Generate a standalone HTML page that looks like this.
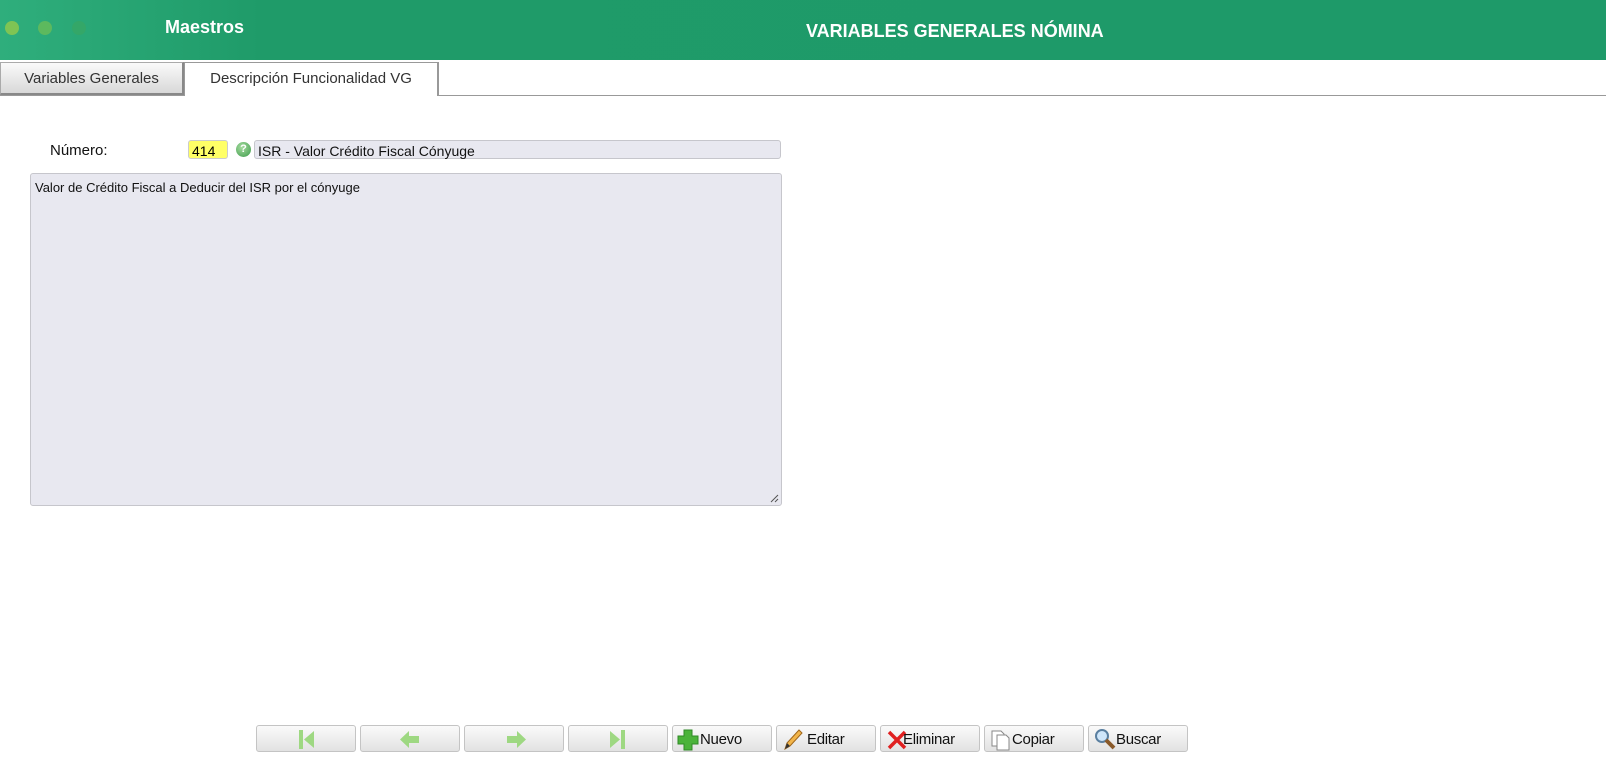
<!DOCTYPE html>
<html><head><style>
body{margin:0;width:1606px;height:771px;background:#fff;position:relative;overflow:hidden;font-family:"Liberation Sans",sans-serif}
.hdr{position:absolute;left:0;top:0;width:1606px;height:60px;background:linear-gradient(90deg,#2fae7c 0,#1f9b69 260px,#1e9a69 100%)}
.dot{position:absolute;top:21px;width:14px;height:14px;border-radius:50%}
.t{position:absolute;color:#fff;font-weight:bold}
.tab{position:absolute;top:62px;height:33px;box-sizing:border-box;font-size:15px;color:#333;text-align:center;line-height:32px}
.btn{position:absolute;top:725px;width:100px;height:27px;box-sizing:border-box;border:1px solid #c4c4c4;border-radius:3px;background:linear-gradient(#fafafa,#e2e2e2);font-size:15px;color:#111;line-height:27px;letter-spacing:-0.3px}
.btn span{position:absolute;top:0}
</style></head><body>
<div class="hdr">
<div class="dot" style="left:5px;background:#7fc454"></div>
<div class="dot" style="left:38px;background:#5db95e"></div>
<div class="dot" style="left:72px;background:#34a768"></div>
<div class="t" style="left:165px;top:17px;font-size:18px">Maestros</div>
<div class="t" style="left:806px;top:21px;font-size:18px">VARIABLES GENERALES NÓMINA</div>
</div>
<div style="position:absolute;left:0;top:95px;width:1606px;height:1px;background:#999"></div>
<div class="tab" style="left:0;width:184px;background:linear-gradient(#fafafa,#d8d8d8);border:1px solid #aaa;border-right:2px solid #888;border-bottom:2px solid #888">Variables Generales</div>
<div class="tab" style="left:184px;width:255px;height:34px;background:#fff;border:1px solid #999;border-bottom:none;border-right:2px solid #999">Descripción Funcionalidad VG</div>
<div style="position:absolute;left:50px;top:142px;font-size:15px;color:#111">Número:</div>
<div style="position:absolute;left:188px;top:140px;width:40px;height:19px;box-sizing:border-box;background:#ffff66;border:1px solid #ccc;border-radius:3px;font-size:14px;padding:2px 0 0 3px">414</div>
<div style="position:absolute;left:236px;top:142px;width:15px;height:15px;border-radius:50%;background:radial-gradient(circle at 40% 35%,#a6dca0,#3c9a4a);color:#fff;font-size:11px;font-weight:bold;text-align:center;line-height:15px">?</div>
<div style="position:absolute;left:254px;top:140px;width:527px;height:19px;box-sizing:border-box;background:#e8e8f0;border:1px solid #c6c6cc;border-radius:3px;font-size:14px;padding:2px 0 0 3px;color:#111">ISR - Valor Crédito Fiscal Cónyuge</div>
<div style="position:absolute;left:30px;top:173px;width:752px;height:333px;box-sizing:border-box;background:#e8e8f0;border:1px solid #c6c6cc;border-radius:3px;font-size:13px;padding:6px 0 0 4px;color:#111">Valor de Crédito Fiscal a Deducir del ISR por el cónyuge
<svg style="position:absolute;right:2px;bottom:2px" width="10" height="10"><path d="M9 2L2 9M9 6L6 9" stroke="#555" stroke-width="1"/></svg></div>

<div class="btn" style="left:256px"><svg style="position:absolute;left:40px;top:3px" width="20" height="21"><rect x="2" y="1" width="4" height="19" fill="#9ed882"/><path d="M17 2L7 10.5L17 19Z" fill="#9ed882"/></svg></div>
<div class="btn" style="left:360px"><svg style="position:absolute;left:38px;top:4px" width="24" height="19"><path d="M1 9.5L10 1V6H20V13H10V18Z" fill="#9ed882"/></svg></div>
<div class="btn" style="left:464px"><svg style="position:absolute;left:38px;top:4px" width="24" height="19"><path d="M23 9.5L14 1V6H4V13H14V18Z" fill="#9ed882"/></svg></div>
<div class="btn" style="left:568px"><svg style="position:absolute;left:38px;top:3px" width="20" height="21"><rect x="14" y="1" width="4" height="19" fill="#9ed882"/><path d="M3 2L13 10.5L3 19Z" fill="#9ed882"/></svg></div>
<div class="btn" style="left:672px"><svg style="position:absolute;left:4px;top:3px" width="22" height="22"><path d="M7 1H15V7H21V15H15V21H7V15H1V7H7Z" fill="#4bb33a" stroke="#2f8a25"/></svg><span style="left:27px">Nuevo</span></div>
<div class="btn" style="left:776px"><svg style="position:absolute;left:5px;top:2px" width="22" height="22"><path d="M3 21L5 15L17 2L20 5L8 18Z" fill="#f2b54a" stroke="#a0661a"/><path d="M3 21L5 15L8 18Z" fill="#333"/></svg><span style="left:30px">Editar</span></div>
<div class="btn" style="left:880px"><svg style="position:absolute;left:6px;top:4px" width="20" height="20"><path d="M2 2L18 18M18 2L2 18" stroke="#e02020" stroke-width="3.5"/></svg><span style="left:22px">Eliminar</span></div>
<div class="btn" style="left:984px"><svg style="position:absolute;left:5px;top:3px" width="22" height="22"><path d="M2 2H11L14 5V17H2Z" fill="#fff" stroke="#888"/><path d="M7 6H16L19 9V21H7Z" fill="#fff" stroke="#888"/></svg><span style="left:27px">Copiar</span></div>
<div class="btn" style="left:1088px"><svg style="position:absolute;left:5px;top:2px" width="22" height="22"><circle cx="8" cy="8" r="6" fill="#cfe6fa" stroke="#5a7fa0" stroke-width="2"/><path d="M12 12L20 20" stroke="#8a5a2a" stroke-width="4"/></svg><span style="left:27px">Buscar</span></div>
</body></html>
